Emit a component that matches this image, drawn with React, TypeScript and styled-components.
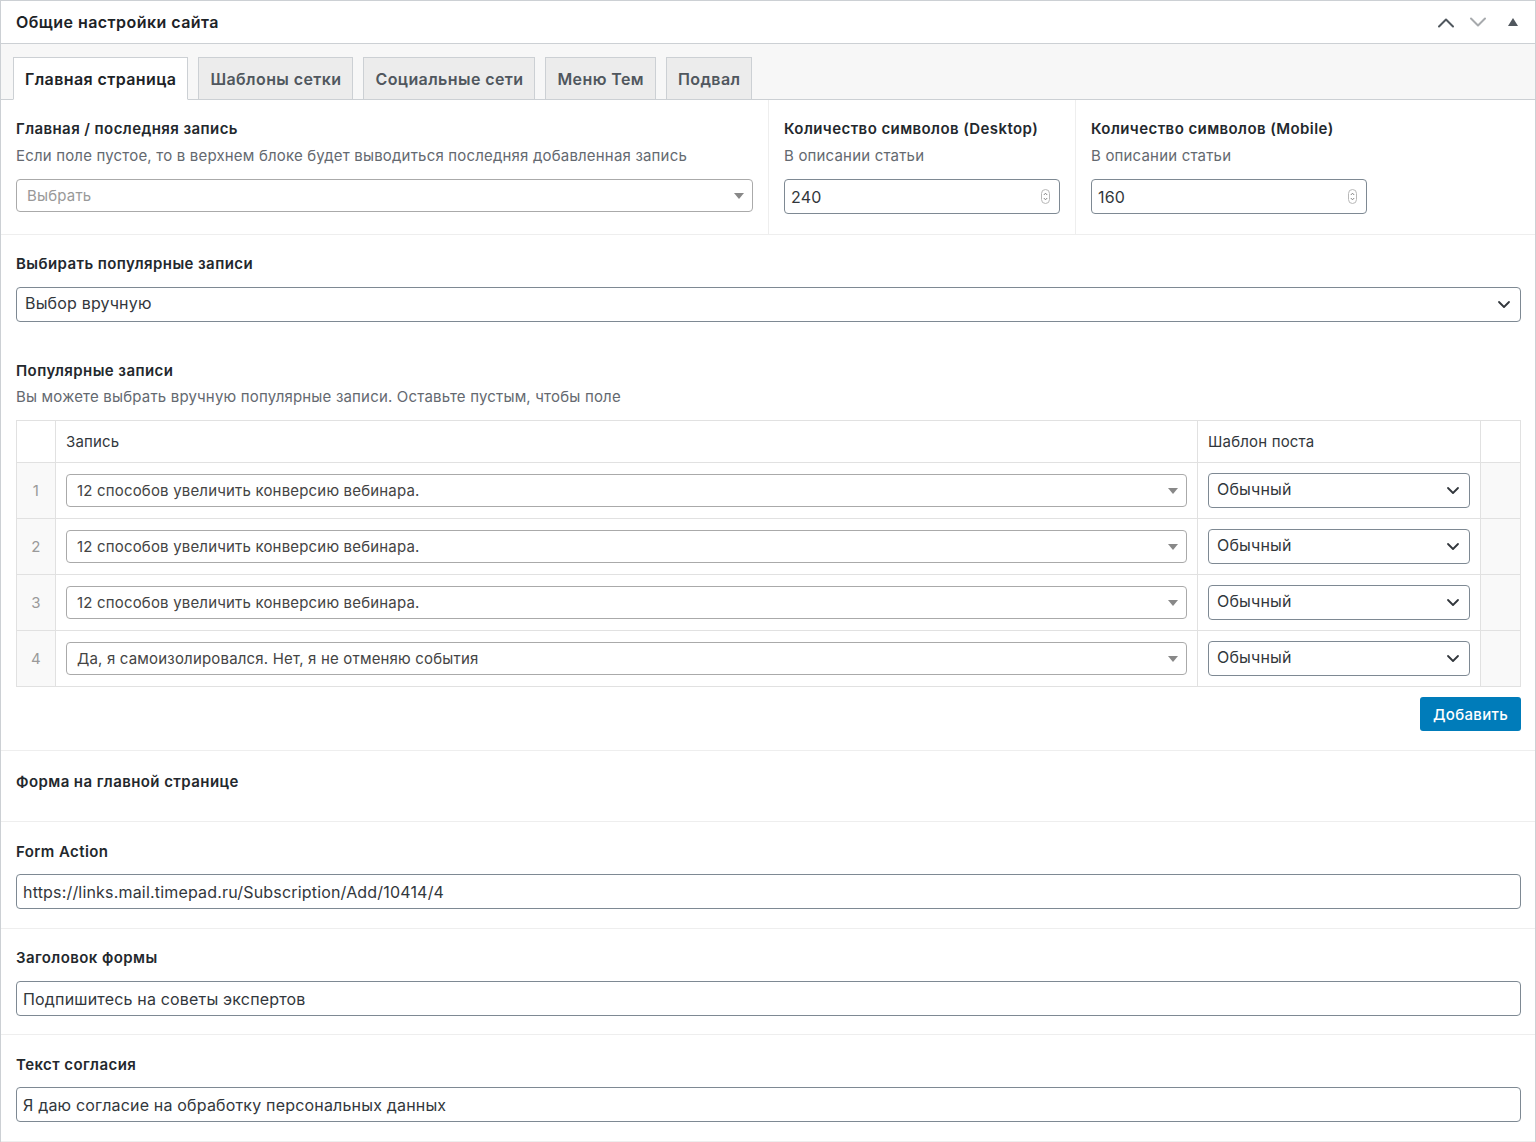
import React from 'react';
import styled, { createGlobalStyle } from 'styled-components';

const Global = createGlobalStyle`
  html, body { margin: 0; padding: 0; background: #fff; }
  body {
    font-family: Inter, "Noto Sans", "Liberation Sans", sans-serif;
    color: #23282d;
    letter-spacing: 0.18px;
    -webkit-font-smoothing: antialiased;
  }
  * { box-sizing: border-box; }
`;

const Panel = styled.div`
  width: 1536px;
  border: 1px solid #ccd0d4;
  border-bottom: none;
  background: #fff;
`;

const Header = styled.div`
  height: 43px;
  display: flex;
  align-items: center;
  justify-content: space-between;
  padding: 0 3px 0 15px;
  border-bottom: 1px solid #ccd0d4;
`;

const Title = styled.h2`
  margin: 0;
  font-size: 16px;
  font-weight: 600;
  color: #1d2327;
  letter-spacing: 0.45px;
`;

const Controls = styled.div`
  display: flex;
  align-items: center;
  height: 100%;
`;

const CtrlButton = styled.div<{ $w: number }>`
  width: ${(p) => p.$w}px;
  height: 100%;
  display: flex;
  align-items: center;
  justify-content: center;
`;

const TabBar = styled.div`
  display: flex;
  align-items: flex-end;
  gap: 10px;
  height: 56px;
  padding: 13px 0 0 12px;
  background: #f7f7f7;
  border-bottom: 1px solid #ccd0d4;
`;

const Tab = styled.div<{ $active?: boolean }>`
  height: 43px;
  margin-bottom: -1px;
  padding: 0 11px;
  display: flex;
  align-items: center;
  font-size: 16px;
  font-weight: 600;
  letter-spacing: 0.4px;
  color: ${(p) => (p.$active ? '#1d2327' : '#50575e')};
  background: ${(p) => (p.$active ? '#fff' : '#ececec')};
  border: 1px solid #ccd0d4;
  border-bottom-color: ${(p) => (p.$active ? '#fff' : '#ccd0d4')};
`;

const TopGrid = styled.div`
  display: grid;
  grid-template-columns: 767px 307px 1fr;
  border-bottom: 1px solid #eeeeee;
`;

const Cell = styled.div<{ $divider?: boolean }>`
  padding: 19px 15px 20px 15px;
  border-left: ${(p) => (p.$divider ? '1px solid #eeeeee' : 'none')};
`;

const Section = styled.div<{ $pt: number; $pb: number; $line?: boolean }>`
  padding: ${(p) => p.$pt}px 14px ${(p) => p.$pb}px 15px;
  border-bottom: ${(p) => (p.$line ? '1px solid #eeeeee' : 'none')};
`;

const Label = styled.div`
  font-size: 15px;
  line-height: 20px;
  font-weight: 600;
  letter-spacing: 0.42px;
  color: #23282d;
`;

const Desc = styled.div<{ $mt?: number }>`
  margin-top: ${(p) => p.$mt ?? 7}px;
  font-size: 15px;
  line-height: 20px;
  color: #646970;
`;

const Field = styled.div<{ $mt: number }>`
  margin-top: ${(p) => p.$mt}px;
`;

const Select2 = styled.div<{ $h: number; $placeholder?: boolean }>`
  height: ${(p) => p.$h}px;
  display: flex;
  align-items: center;
  justify-content: space-between;
  padding: 0 8px 0 10px;
  border: 1px solid #aaaaaa;
  border-radius: 4px;
  background: #fff;
  font-size: 15px;
  color: ${(p) => (p.$placeholder ? '#999999' : '#444444')};
`;

const NativeSelect = styled.div<{ $h: number }>`
  height: ${(p) => p.$h}px;
  display: flex;
  align-items: center;
  justify-content: space-between;
  padding: 0 9px 0 8px;
  border: 1px solid #7e8993;
  border-radius: 4px;
  background: #fff;
  font-size: 16px;
  color: #32373c;
`;

const SelectText = styled.span`
  margin-top: -3px;
`;

const NumberInput = styled.div`
  width: 276px;
  height: 35px;
  display: flex;
  align-items: center;
  justify-content: space-between;
  padding: 0 9px 0 6px;
  border: 1px solid #7e8993;
  border-radius: 4px;
  font-size: 16px;
  color: #32373c;
`;

const TextInput = styled.div`
  height: 35px;
  display: flex;
  align-items: center;
  padding: 0 6px;
  border: 1px solid #7e8993;
  border-radius: 4px;
  font-size: 16px;
  color: #32373c;
`;

const Table = styled.table`
  width: 100%;
  margin-top: 13px;
  border-collapse: collapse;
  table-layout: fixed;
  border: 1px solid #e1e1e1;
`;

const Th = styled.th`
  height: 42px;
  padding: 0 10px;
  text-align: left;
  font-size: 15px;
  font-weight: 400;
  color: #32373c;
  border: 1px solid #e1e1e1;
`;

const Td = styled.td<{ $shade?: boolean; $num?: boolean }>`
  height: 56px;
  padding: 0 10px;
  border: 1px solid #e1e1e1;
  background: ${(p) => (p.$shade ? '#f9f9f9' : '#fff')};
  text-align: ${(p) => (p.$num ? 'center' : 'left')};
  font-size: 15px;
  color: #9a9a9a;
  vertical-align: middle;
`;

const ButtonRow = styled.div`
  display: flex;
  justify-content: flex-end;
  margin-top: 10px;
`;

const PrimaryButton = styled.button`
  height: 34px;
  padding: 0 13px;
  border: none;
  border-radius: 3px;
  background: #007cba;
  color: #fff;
  font-family: inherit;
  font-size: 15px;
  font-weight: 500;
  letter-spacing: 0.3px;
`;

const Triangle = () => (
  <svg width="10" height="6" viewBox="0 0 10 6">
    <path d="M0 0 L10 0 L5 6 Z" fill="#888" />
  </svg>
);

const Chevron = ({ up, color }: { up?: boolean; color: string }) => (
  <svg width="18" height="11" viewBox="0 0 18 11">
    <path
      d={up ? 'M2 9.5 L9 2.5 L16 9.5' : 'M2 1.5 L9 8.5 L16 1.5'}
      fill="none"
      stroke={color}
      strokeWidth="2"
      strokeLinecap="round"
      strokeLinejoin="round"
    />
  </svg>
);

const SmallChevron = () => (
  <svg width="14" height="9" viewBox="0 0 14 9">
    <path d="M2 2 L7 7 L12 2" fill="none" stroke="#32373c" strokeWidth="1.8" strokeLinecap="round" strokeLinejoin="round" />
  </svg>
);

const Spinner = () => (
  <svg width="9" height="15" viewBox="0 0 9 15">
    <rect x="0.5" y="0.5" width="8" height="14" rx="4" fill="#fff" stroke="#b8b8b8" />
    <path d="M2.8 6 L4.5 4.2 L6.2 6" fill="none" stroke="#777" strokeWidth="0.9" />
    <path d="M2.8 9 L4.5 10.8 L6.2 9" fill="none" stroke="#777" strokeWidth="0.9" />
  </svg>
);

const UpTriangle = () => (
  <svg width="10" height="8" viewBox="0 0 10 8">
    <path d="M5 0 L10 8 L0 8 Z" fill="#50575e" />
  </svg>
);

const rows = [
  '12 способов увеличить конверсию вебинара.',
  '12 способов увеличить конверсию вебинара.',
  '12 способов увеличить конверсию вебинара.',
  'Да, я самоизолировался. Нет, я не отменяю события',
];

export default function App() {
  return (
    <>
      <Global />
      <Panel>
        <Header>
          <Title>Общие настройки сайта</Title>
          <Controls>
            <CtrlButton $w={31}>
              <Chevron up color="#50575e" />
            </CtrlButton>
            <CtrlButton $w={33}>
              <Chevron color="#a7aaad" />
            </CtrlButton>
            <CtrlButton $w={38}>
              <UpTriangle />
            </CtrlButton>
          </Controls>
        </Header>

        <TabBar>
          <Tab $active>Главная страница</Tab>
          <Tab>Шаблоны сетки</Tab>
          <Tab>Социальные сети</Tab>
          <Tab>Меню Тем</Tab>
          <Tab>Подвал</Tab>
        </TabBar>

        <TopGrid>
          <Cell>
            <Label>Главная / последняя запись</Label>
            <Desc>Если поле пустое, то в верхнем блоке будет выводиться последняя добавленная запись</Desc>
            <Field $mt={13}>
              <Select2 $h={33} $placeholder>
                <span>Выбрать</span>
                <Triangle />
              </Select2>
            </Field>
          </Cell>
          <Cell $divider>
            <Label>Количество символов (Desktop)</Label>
            <Desc>В описании статьи</Desc>
            <Field $mt={13}>
              <NumberInput>
                <span>240</span>
                <Spinner />
              </NumberInput>
            </Field>
          </Cell>
          <Cell $divider>
            <Label>Количество символов (Mobile)</Label>
            <Desc>В описании статьи</Desc>
            <Field $mt={13}>
              <NumberInput>
                <span>160</span>
                <Spinner />
              </NumberInput>
            </Field>
          </Cell>
        </TopGrid>

        <Section $pt={19} $pb={19}>
          <Label>Выбирать популярные записи</Label>
          <Field $mt={13}>
            <NativeSelect $h={35}>
              <SelectText>Выбор вручную</SelectText>
              <SmallChevron />
            </NativeSelect>
          </Field>
        </Section>

        <Section $pt={20} $pb={19} $line>
          <Label>Популярные записи</Label>
          <Desc $mt={6}>
            Вы можете выбрать вручную популярные записи. Оставьте пустым, чтобы поле
          </Desc>
          <Table>
            <colgroup>
              <col style={{ width: 39 }} />
              <col />
              <col style={{ width: 283 }} />
              <col style={{ width: 40 }} />
            </colgroup>
            <thead>
              <tr>
                <Th />
                <Th>Запись</Th>
                <Th>Шаблон поста</Th>
                <Th />
              </tr>
            </thead>
            <tbody>
              {rows.map((r, i) => (
                <tr key={i}>
                  <Td $shade $num>
                    {i + 1}
                  </Td>
                  <Td>
                    <Select2 $h={33}>
                      <span>{r}</span>
                      <Triangle />
                    </Select2>
                  </Td>
                  <Td>
                    <NativeSelect $h={35}>
                      <SelectText>Обычный</SelectText>
                      <SmallChevron />
                    </NativeSelect>
                  </Td>
                  <Td $shade />
                </tr>
              ))}
            </tbody>
          </Table>
          <ButtonRow>
            <PrimaryButton>Добавить</PrimaryButton>
          </ButtonRow>
        </Section>

        <Section $pt={21} $pb={29} $line>
          <Label>Форма на главной странице</Label>
        </Section>

        <Section $pt={20} $pb={19} $line>
          <Label>Form Action</Label>
          <Field $mt={12}>
            <TextInput>https://links.mail.timepad.ru/Subscription/Add/10414/4</TextInput>
          </Field>
        </Section>

        <Section $pt={19} $pb={18} $line>
          <Label>Заголовок формы</Label>
          <Field $mt={13}>
            <TextInput>Подпишитесь на советы экспертов</TextInput>
          </Field>
        </Section>

        <Section $pt={20} $pb={19} $line>
          <Label>Текст согласия</Label>
          <Field $mt={12}>
            <TextInput>Я даю согласие на обработку персональных данных</TextInput>
          </Field>
        </Section>
      </Panel>
    </>
  );
}
